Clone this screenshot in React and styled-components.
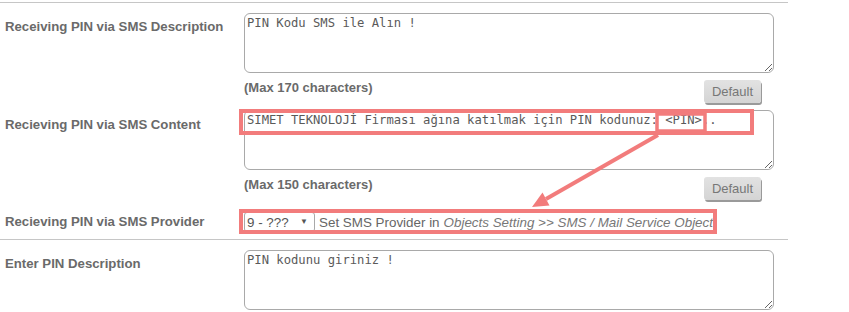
import React from "react";
import styled, { createGlobalStyle } from "styled-components";

const GlobalStyle = createGlobalStyle`
  html, body { margin: 0; padding: 0; background: #ffffff; }
  body { font-family: "Liberation Sans", Arial, sans-serif; }
`;

const Page = styled.div`
  position: relative;
  width: 849px;
  height: 312px;
  overflow: hidden;
  padding-top: 2px;
  box-sizing: border-box;
`;

const Form = styled.div`
  width: 788px;
  border-top: 1px solid #c6c6c6;
`;

const Row = styled.div`
  display: grid;
  grid-template-columns: 244px 530px;
  padding-top: ${(p) => p.$padTop}px;
  padding-bottom: ${(p) => p.$padBottom || 0}px;
  border-bottom: ${(p) => (p.$divider ? "1px solid #c6c6c6" : "none")};
`;

const Label = styled.div`
  padding-left: 5px;
  padding-top: ${(p) => p.$offset}px;
  font-size: 13.2px;
  line-height: 15px;
  font-weight: bold;
  color: #6a6a6a;
`;

const Field = styled.div`
  display: flex;
  flex-direction: column;
`;

const TextArea = styled.textarea`
  display: block;
  box-sizing: border-box;
  width: 530px;
  height: 60px;
  margin: 0;
  padding: 2px 2px;
  border: 1px solid #a9a9a9;
  border-radius: 6px;
  font-family: "DejaVu Sans Mono", monospace;
  font-size: 12.2px;
  line-height: 15px;
  color: #5a5a5a;
  background: #fff;
  outline: none;
`;

const NoteRow = styled.div`
  display: flex;
  justify-content: space-between;
  align-items: flex-start;
  margin-top: 6px;
  height: 25px;
  padding-right: 13px;
`;

const Note = styled.span`
  padding-top: 1px;
  font-size: 13px;
  line-height: 15px;
  font-weight: bold;
  color: #6a6a6a;
`;

const DefaultButton = styled.button`
  box-sizing: border-box;
  width: 57px;
  height: 23px;
  margin-top: 1px;
  padding: 0;
  border: none;
  border-radius: 3px;
  background: linear-gradient(#e2e2e2, #d4d4d4);
  box-shadow: 1px 2px 0 #9a9a9a;
  font-family: "Liberation Sans", Arial, sans-serif;
  font-size: 13px;
  color: #777;
  cursor: pointer;
`;

const ProviderLine = styled.div`
  display: flex;
  align-items: center;
  height: 20px;
  font-size: 13.4px;
  color: #666;
`;

const SelectBox = styled.div`
  position: relative;
  box-sizing: border-box;
  width: 71px;
  height: 20px;
  margin-right: 4px;
  border: 1px solid #a9a9a9;
  border-radius: 3px;
  background: #fff;
`;

const Select = styled.select`
  appearance: none;
  -webkit-appearance: none;
  box-sizing: border-box;
  width: 100%;
  height: 100%;
  margin: 0;
  padding: 0 0 0 2px;
  border: none;
  background: transparent;
  font-family: "Liberation Sans", Arial, sans-serif;
  font-size: 13.4px;
  color: #555;
  outline: none;
`;

const SelectArrow = styled.span`
  position: absolute;
  right: 6px;
  top: 4px;
  font-size: 8px;
  line-height: 10px;
  color: #555;
  pointer-events: none;
`;

const Path = styled.em`
  font-style: italic;
  color: #777;
  margin-left: 4px;
`;

const Overlay = styled.svg`
  position: absolute;
  left: 0;
  top: 0;
  pointer-events: none;
`;

const RED = "#f27c7c";

export default function App() {
  return (
    <>
      <GlobalStyle />
      <Page>
        <Form>
          <Row $padTop={10}>
            <Label $offset={6}>Receiving PIN via SMS Description</Label>
            <Field>
              <TextArea readOnly defaultValue="PIN Kodu SMS ile Alın !" />
              <NoteRow>
                <Note>(Max 170 characters)</Note>
                <DefaultButton>Default</DefaultButton>
              </NoteRow>
            </Field>
          </Row>
          <Row $padTop={6}>
            <Label $offset={7}>Recieving PIN via SMS Content</Label>
            <Field>
              <TextArea
                readOnly
                defaultValue="SIMET TEKNOLOJİ Firması ağına katılmak için PIN kodunuz: <PIN>.."
              />
              <NoteRow>
                <Note>(Max 150 characters)</Note>
                <DefaultButton>Default</DefaultButton>
              </NoteRow>
            </Field>
          </Row>
          <Row $padTop={11} $padBottom={7} $divider>
            <Label $offset={2}>Recieving PIN via SMS Provider</Label>
            <Field>
              <ProviderLine>
                <SelectBox>
                  <Select defaultValue="9">
                    <option value="9">9 - ???</option>
                  </Select>
                  <SelectArrow>▼</SelectArrow>
                </SelectBox>
                Set SMS Provider in
                <Path>Objects Setting &gt;&gt; SMS / Mail Service Object</Path>
              </ProviderLine>
            </Field>
          </Row>
          <Row $padTop={10}>
            <Label $offset={6}>Enter PIN Description</Label>
            <Field>
              <TextArea readOnly defaultValue="PIN kodunu giriniz !" />
            </Field>
          </Row>
        </Form>
        <Overlay width="849" height="312" viewBox="0 0 849 312">
          <rect x="241" y="111" width="511" height="22" fill="none" stroke={RED} strokeWidth="4" />
          <rect x="657" y="114" width="48" height="17" fill="none" stroke={RED} strokeWidth="3.5" />
          <line x1="658" y1="135" x2="546" y2="199" stroke={RED} strokeWidth="4" />
          <polygon points="532,207 549.5,205.5 542.5,192.5" fill={RED} />
          <rect x="241" y="211" width="474" height="21" fill="none" stroke={RED} strokeWidth="4" />
        </Overlay>
      </Page>
    </>
  );
}
